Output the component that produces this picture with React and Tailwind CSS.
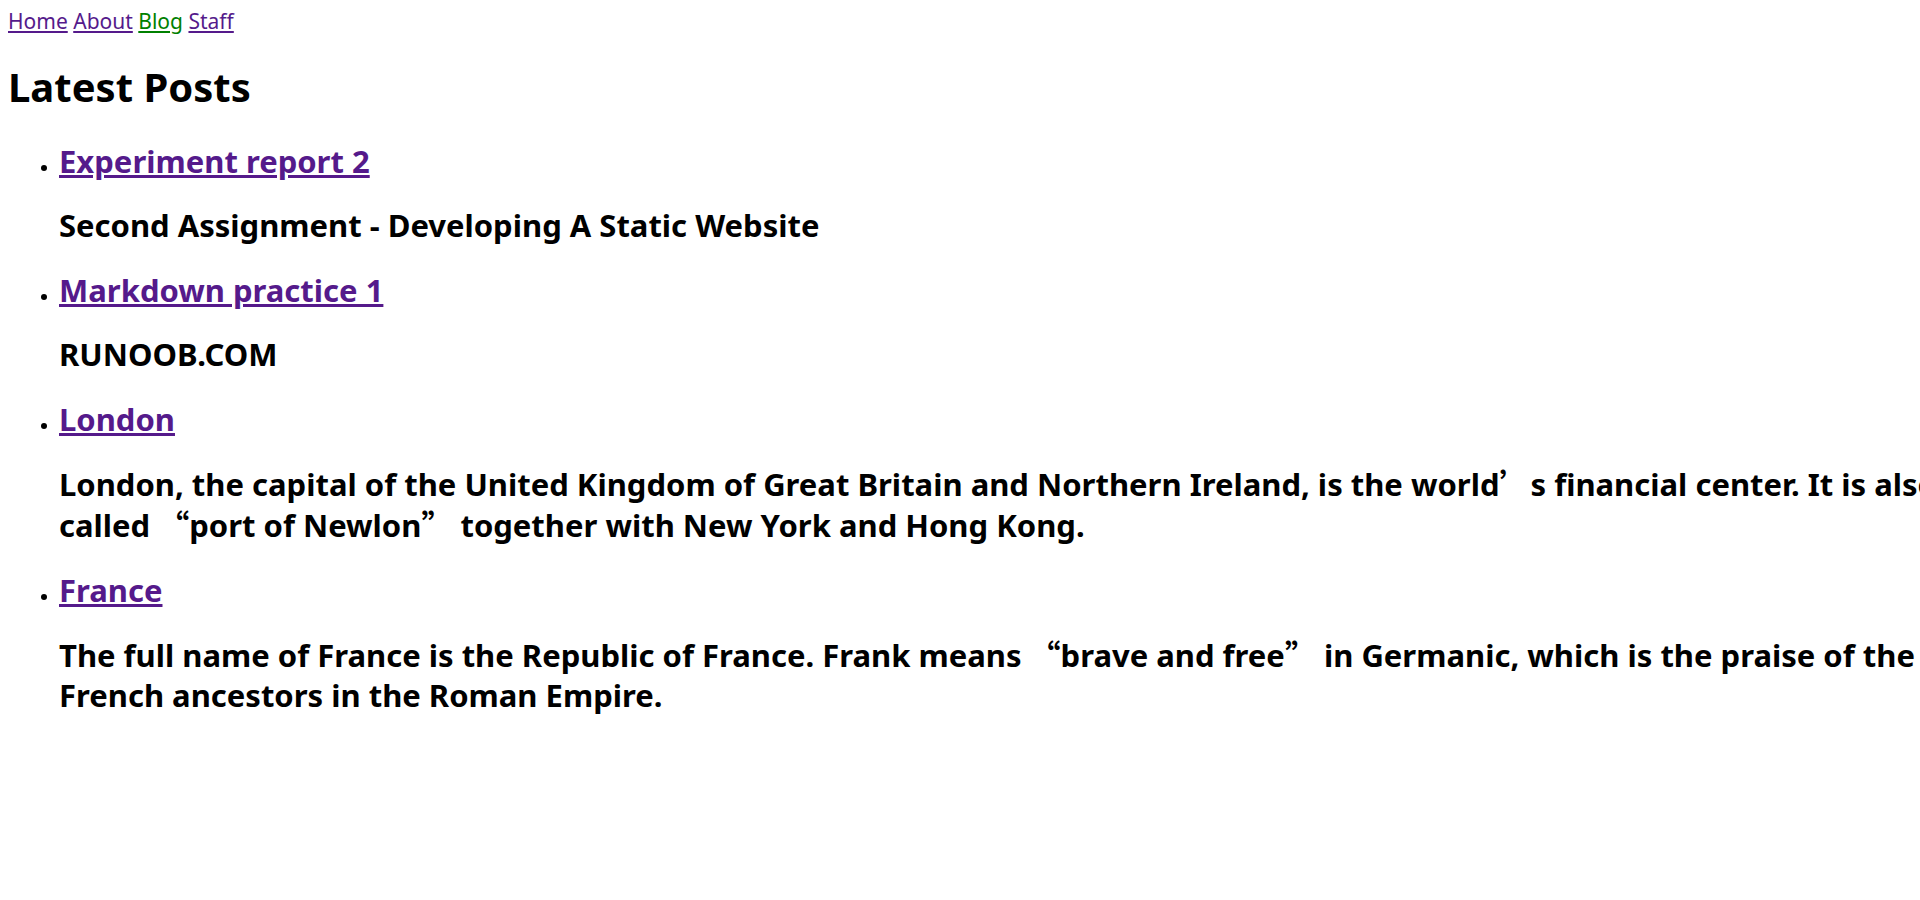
import React from "react";

const Q = ({ children }) => (
  <span className="font-['Noto_Sans_CJK_SC',sans-serif]">{children}</span>
);

const posts = [
  {
    title: "Experiment report 2",
    body: "Second Assignment - Developing A Static Website",
  },
  { title: "Markdown practice 1", body: "RUNOOB.COM" },
  {
    title: "London",
    body: (
      <>
        London, the capital of the United Kingdom of Great Britain and Northern Ireland, is the world<Q>’</Q>s
        financial center. It is also called <Q>“</Q>port of Newlon<Q>”</Q> together with New York and Hong Kong.
      </>
    ),
  },
  {
    title: "France",
    body: (
      <>
        The full name of France is the Republic of France. Frank means <Q>“</Q>brave and free<Q>”</Q> in
        Germanic, which is the praise of the French ancestors in the Roman Empire.
      </>
    ),
  },
];

export default function App() {
  return (
    <div className="min-h-screen w-full overflow-hidden bg-white font-['Noto_Sans',sans-serif] text-black">
      <div className="w-[1990px] p-2">
        {/* nav */}
        <nav className="text-[21px] leading-[26px]">
          <a href="#" className="text-[#551a8b] underline">Home</a>{" "}
          <a href="#" className="text-[#551a8b] underline">About</a>{" "}
          <a href="#" className="text-[#008000] underline">Blog</a>{" "}
          <a href="#" className="text-[#551a8b] underline">Staff</a>
        </nav>

        <h1 className="mt-[27px] text-[40px] font-bold leading-[52px]">Latest Posts</h1>

        <ul className="mt-[28px] list-disc pl-[51px]">
          {posts.map((p) => (
            <li key={p.title} className="mb-[25px]">
              <h2 className="text-[31px] font-bold leading-[40px]">
                <a href="#" className="text-[#551a8b] underline">{p.title}</a>
              </h2>
              <p className="mt-[24px] text-[31px] font-bold leading-[40px]">{p.body}</p>
            </li>
          ))}
        </ul>
      </div>
    </div>
  );
}
